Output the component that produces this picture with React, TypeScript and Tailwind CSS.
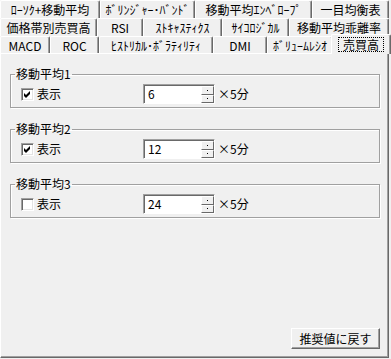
import React, { useState } from 'react';

const font = "font-['Noto_Sans_CJK_JP','Noto_Sans_CJK_SC',sans-serif]";

type TabDef = { label: string; w: string };

const rows: TabDef[][] = [
  [
    { label: 'ﾛｰｿｸ+移動平均', w: 'w-[100px]' },
    { label: 'ﾎﾞﾘﾝｼﾞｬｰ･ﾊﾞﾝﾄﾞ', w: 'w-[95px]' },
    { label: '移動平均ｴﾝﾍﾞﾛｰﾌﾟ', w: 'w-[117px]' },
    { label: '一目均衡表', w: 'w-[77px]' },
  ],
  [
    { label: '価格帯別売買高', w: 'w-[97px]' },
    { label: 'RSI', w: 'w-[46px]' },
    { label: 'ｽﾄｷｬｽﾃｨｸｽ', w: 'w-[79px]' },
    { label: 'ｻｲｺﾛｼﾞｶﾙ', w: 'w-[67px]' },
    { label: '移動平均乖離率', w: 'w-[100px]' },
  ],
  [
    { label: 'MACD', w: 'w-[50px]' },
    { label: 'ROC', w: 'w-[49px]' },
    { label: 'ﾋｽﾄﾘｶﾙ･ﾎﾞﾗﾃｨﾘﾃｨ', w: 'w-[114px]' },
    { label: 'DMI', w: 'w-[54px]' },
    { label: 'ﾎﾞﾘｭｰﾑﾚｼｵ', w: 'w-[66px]' },
    { label: '売買高', w: 'w-[56px]' },
  ],
];

function Tab({ tab, selected }: { tab: TabDef; selected: boolean }) {
  if (selected) {
    return (
      <div className={`${tab.w} relative h-full`}>
        <div className="absolute -left-[2px] -right-[2px] -top-[2px] -bottom-[1px] z-10 flex items-center justify-center bg-[#f0f0f0] border-l border-t border-white border-r border-r-[#696969] rounded-t-[2px] shadow-[inset_-1px_0_0_#a0a0a0]">
          <span className="border border-dotted border-black px-[4px] leading-[13px]">{tab.label}</span>
        </div>
      </div>
    );
  }
  return (
    <div className={`${tab.w} h-full flex items-center justify-center border-l border-t border-white border-r border-r-[#696969] rounded-t-[2px] shadow-[inset_-1px_0_0_#a0a0a0] leading-none pt-[1px]`}>
      {tab.label}
    </div>
  );
}

function Checkbox({ checked }: { checked: boolean }) {
  return (
    <div className="w-[13px] h-[13px] bg-white border-t border-l border-[#a0a0a0] border-r border-b border-r-white border-b-white shadow-[inset_1px_1px_0_#696969,inset_-1px_-1px_0_#e3e3e3] flex items-center justify-center">
      {checked && (
        <svg width="7" height="7" viewBox="0 0 7 7">
          <path d="M0 2 L2 4 L6 0 L6 3 L2 7 L0 5 Z" fill="#000" />
        </svg>
      )}
    </div>
  );
}

function Spin({ value }: { value: string }) {
  return (
    <div className="flex w-[72px] h-[20px] border-t border-l border-[#a0a0a0] border-r border-b border-r-white border-b-white">
      <div className="flex flex-1 bg-white shadow-[inset_1px_1px_0_#696969]">
        <div className="flex-1 pl-[4px] pt-[2px] leading-[14px]">{value}</div>
        <div className="flex flex-col w-[13px] pt-[1px]">
          {[0, 1].map((i) => (
            <div
              key={i}
              className="h-[9px] bg-[#f0f0f0] border-t border-l border-white border-r border-b border-r-[#696969] border-b-[#696969] flex items-center justify-center"
            >
              <div className="w-[1px] h-[1px] bg-black" />
            </div>
          ))}
        </div>
      </div>
    </div>
  );
}

function Group({ title, checked, value }: { title: string; checked: boolean; value: string }) {
  return (
    <fieldset className="border border-[#a0a0a0] shadow-[inset_1px_1px_0_#fff,1px_1px_0_#fff] pl-[4px] pr-[4px] pb-[3px]">
      <legend className="px-[1px] leading-[12px]">{title}</legend>
      <div className="flex items-center pt-[4px] pl-[6px]">
        <div className="w-[122px] flex items-center">
          <Checkbox checked={checked} />
          <span className="ml-[3px] leading-none">表示</span>
        </div>
        <Spin value={value} />
        <span className="ml-[3px] leading-none">×5分</span>
      </div>
    </fieldset>
  );
}

export default function App() {
  const [selected] = useState('売買高');

  return (
    <div className={`w-[391px] h-[359px] bg-[#f0f0f0] overflow-hidden text-[12px] text-black ${font}`}>
      <div className="flex flex-col w-[389px]">
        {rows.map((row, i) => (
          <div key={i} className={`flex ${i === 2 ? 'h-[17px]' : 'h-[18px]'}`}>
            {row.map((t) => (
              <Tab key={t.label} tab={t} selected={t.label === selected} />
            ))}
          </div>
        ))}
      </div>
      <div className="w-[389px] h-[305px] border-l border-t border-white border-r border-b border-r-[#696969] border-b-[#696969] shadow-[inset_-1px_-1px_0_#a0a0a0] flex flex-col pl-[9px] pr-[8px] pt-[14px]">
        <div className="flex flex-col gap-[15px]">
          <Group title="移動平均1" checked value="6" />
          <Group title="移動平均2" checked value="12" />
          <Group title="移動平均3" checked={false} value="24" />
        </div>
        <div className="mt-auto mb-[8px] flex justify-end">
          <button className="w-[89px] h-[21px] bg-[#f0f0f0] border-t border-l border-white border-r border-b border-r-[#696969] border-b-[#696969] shadow-[inset_-1px_-1px_0_#a0a0a0] leading-none">
            推奨値に戻す
          </button>
        </div>
      </div>
    </div>
  );
}
